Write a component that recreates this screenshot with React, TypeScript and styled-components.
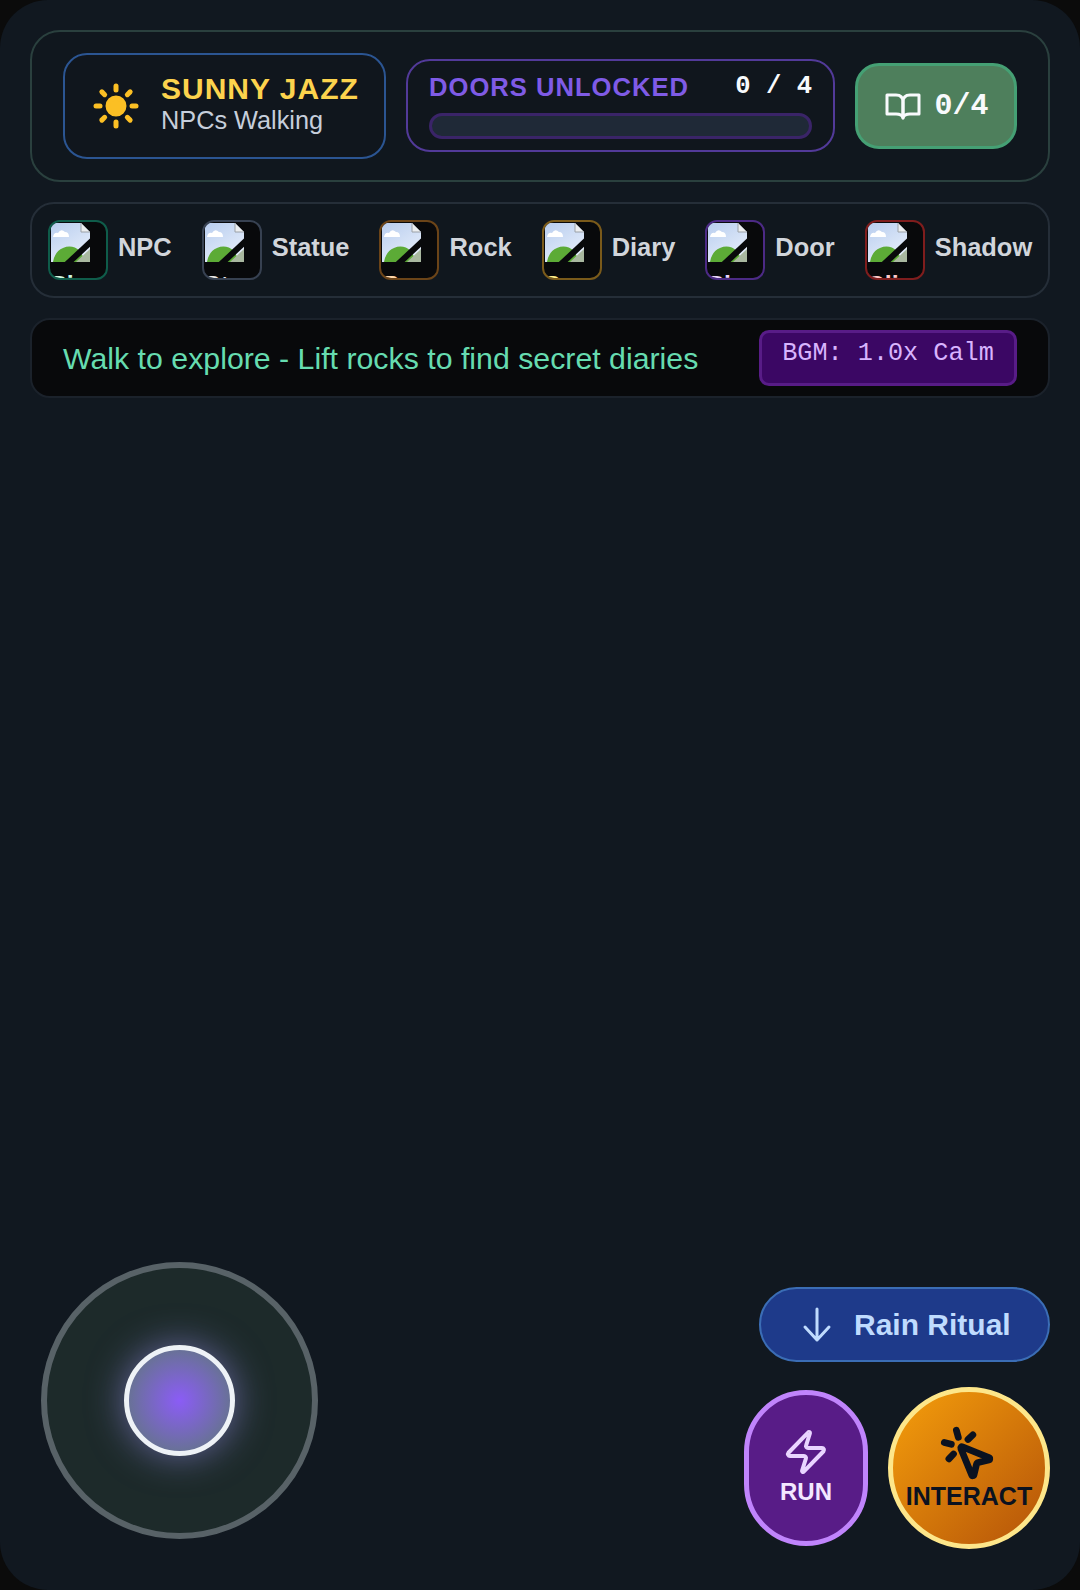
import React from 'react';
import styled, { createGlobalStyle } from 'styled-components';
import { Sun, Zap, MousePointerClick } from 'lucide-react';

const GlobalStyle = createGlobalStyle`
  html, body {
    margin: 0;
    padding: 0;
    background: #0b0b0b;
  }
  * {
    box-sizing: border-box;
  }
`;

const Screen = styled.div`
  width: 1080px;
  height: 1590px;
  border-radius: 48px;
  background: #111820;
  padding: 30px 30px 41px;
  display: flex;
  flex-direction: column;
  gap: 20px;
  overflow: hidden;
  font-family: 'Liberation Sans', Arial, sans-serif;
`;

const Header = styled.header`
  display: flex;
  align-items: center;
  gap: 20px;
  padding: 21px 30px 21px 31px;
  border: 2px solid #2a403e;
  border-radius: 30px;
  background: #10171e;
`;

const WeatherBox = styled.div`
  width: 323px;
  height: 106px;
  display: flex;
  align-items: center;
  gap: 21px;
  padding-left: 27px;
  border: 2px solid #2b5592;
  border-radius: 24px;
  background: #10161d;
`;

const WeatherText = styled.div`
  display: flex;
  flex-direction: column;
  padding-bottom: 6px;
`;

const WeatherTitle = styled.div`
  color: #fcd34d;
  font-size: 30px;
  font-weight: 700;
  letter-spacing: 1px;
  line-height: 34px;
`;

const WeatherSub = styled.div`
  color: #c6cedb;
  font-size: 25.3px;
  line-height: 28px;
`;

const ProgressBox = styled.div`
  width: 429px;
  height: 93px;
  margin-bottom: 2px;
  padding: 9px 21px 0;
  border: 2px solid #523a99;
  border-radius: 24px;
  background: #10161d;
`;

const ProgressTop = styled.div`
  display: flex;
  justify-content: space-between;
  align-items: center;
  height: 36px;
  margin-bottom: 7px;
`;

const ProgressLabel = styled.span`
  color: #7f5be6;
  font-size: 25.6px;
  font-weight: 700;
  letter-spacing: 1px;
`;

const ProgressCount = styled.span`
  color: #f8fafc;
  font-family: 'Liberation Mono', monospace;
  font-size: 25.6px;
  font-weight: 700;
  position: relative;
  top: -1px;
`;

const ProgressTrack = styled.div`
  height: 26px;
  border: 3px solid #3a2468;
  border-radius: 14px;
  background: #1f2937;
`;

const DiaryButton = styled.button`
  width: 162px;
  height: 86px;
  display: flex;
  align-items: center;
  justify-content: center;
  gap: 13px;
  padding: 0 0 0 2px;
  border: 3px solid #45a074;
  border-radius: 24px;
  background: #4e7f5c;
  color: #f8fafc;
  font-family: 'Liberation Mono', monospace;
  font-size: 30px;
  font-weight: 700;
`;

const Legend = styled.section`
  height: 96px;
  display: flex;
  align-items: center;
  gap: 30px;
  padding-left: 16px;
  border: 2px solid #252e38;
  border-radius: 24px;
  background: #10171e;
`;

const LegendItem = styled.div`
  display: flex;
  align-items: center;
  gap: 10px;
`;

const Tile = styled.div<{ $border: string; $ink: string }>`
  width: 60px;
  height: 60px;
  border: 2px solid ${(p) => p.$border};
  border-radius: 12px;
  background: #08090b;
  color: ${(p) => p.$ink};
  font-size: 25px;
  font-weight: 700;
  line-height: 30px;
  overflow: hidden;
  white-space: nowrap;
`;

const BrokenIcon = styled.svg`
  display: block;
  width: 40px;
  height: 40px;
  margin: 0 0 8px 0;
`;

const LegendLabel = styled.span`
  color: #d1d5db;
  font-size: 25.45px;
  font-weight: 700;
  padding-bottom: 6px;
`;

const MessageBar = styled.section`
  height: 80px;
  display: flex;
  align-items: center;
  justify-content: space-between;
  padding: 0 31px;
  border: 2px solid #1b222b;
  border-radius: 20px;
  background: #08090b;
`;

const Message = styled.span`
  color: #66dcb0;
  font-size: 30.3px;
  padding-top: 1px;
`;

const Badge = styled.div`
  width: 258px;
  height: 56px;
  padding-top: 6px;
  border: 3px solid #581c87;
  border-radius: 10px;
  background: #3b0764;
  color: #d8b4fe;
  font-family: 'Liberation Mono', monospace;
  font-size: 25.2px;
  text-align: center;
`;

const Controls = styled.div`
  margin-top: auto;
  display: flex;
  align-items: flex-end;
  justify-content: space-between;
`;

const Joystick = styled.div`
  width: 277px;
  height: 277px;
  margin: 0 0 10px 11px;
  display: flex;
  align-items: center;
  justify-content: center;
  border: 6px solid #586267;
  border-radius: 50%;
  background: #1d2a2a;
`;

const Knob = styled.div`
  width: 111px;
  height: 111px;
  border: 5px solid #eef2f7;
  border-radius: 50%;
  background: radial-gradient(circle, #8b5cf6 0%, #64748b 80%);
  box-shadow: 0 0 36px rgba(160, 150, 250, 0.55);
`;

const Actions = styled.div`
  display: flex;
  flex-direction: column;
  align-items: flex-end;
  gap: 25px;
`;

const RainButton = styled.button`
  width: 291px;
  height: 75px;
  display: flex;
  align-items: center;
  gap: 22px;
  padding: 0 0 0 41px;
  border: 2px solid #3b6db5;
  border-radius: 38px;
  background: #1e3a8a;
  color: #bfdbfe;
  font-family: inherit;
  font-size: 30px;
  font-weight: 700;
`;

const ActionRow = styled.div`
  display: flex;
  align-items: center;
  gap: 20px;
`;

const RunButton = styled.button`
  width: 124px;
  height: 156px;
  display: flex;
  flex-direction: column;
  align-items: center;
  justify-content: center;
  gap: 2px;
  padding: 0 0 3px;
  border: 5px solid #c084fc;
  border-radius: 62px;
  background: #581c87;
  color: #f3e8ff;
  font-family: inherit;
  font-size: 24px;
  font-weight: 700;
`;

const InteractButton = styled.button`
  width: 162px;
  height: 162px;
  display: flex;
  flex-direction: column;
  align-items: center;
  justify-content: center;
  padding: 0 2px 3px 0;
  border: 5px solid #fde68a;
  border-radius: 50%;
  background: linear-gradient(135deg, #f59e0b, #b45309);
  color: #0b1220;
  font-family: inherit;
  font-size: 25px;
  font-weight: 700;
  line-height: 26px;
`;

const InteractLabel = styled.span`
  position: relative;
  left: 1px;
`;

const legendItems = [
  { label: 'NPC', alt: 'Pi', border: '#0f5c4a', ink: '#d1fae5' },
  { label: 'Statue', alt: 'St', border: '#374151', ink: '#e5e7eb' },
  { label: 'Rock', alt: 'R', border: '#6b4418', ink: '#fed7aa' },
  { label: 'Diary', alt: 'S', border: '#7a5a1a', ink: '#fef08a' },
  { label: 'Door', alt: 'Pi', border: '#4c2a85', ink: '#e9d5ff' },
  { label: 'Shadow', alt: 'Cli', border: '#7f1d1d', ink: '#fecaca' },
];

// the browser's broken image picture
const BrokenImage: React.FC = () => {
  const skyId = React.useId();
  return (
    <BrokenIcon viewBox="0 0 40 40" aria-hidden="true">
      <defs>
        <linearGradient id={skyId} x1="0" y1="0" x2="0.6" y2="1">
          <stop offset="0" stopColor="#b8cdee" />
          <stop offset="1" stopColor="#e6eefb" />
        </linearGradient>
      </defs>
      <path d="M1 1H31L40 10V40H1Z" fill={`url(#${skyId})`} />
      <path d="M3 15Q4 10 8 11Q11 6 15 10Q19 10 19 15Z" fill="#fff" />
      <path d="M3 40Q5 29 13 26Q22 22 30 29L36 40Z" fill="#5cab36" />
      <path d="M26 40L40 27V40Z" fill="#a9b8a0" />
      <path d="M31 1V10H40Z" fill="#eceef0" stroke="#9aa0a6" strokeWidth="1" />
      <path d="M31 0H40V9Z" fill="#08090b" />
      <path d="M44 17L16 43" stroke="#08090b" strokeWidth="6" />
    </BrokenIcon>
  );
};

const App: React.FC = () => (
  <>
    <GlobalStyle />
    <Screen>
      <Header>
        <WeatherBox>
          <Sun size={48} strokeWidth={2.5} color="#fbbf24" fill="#fbbf24" />
          <WeatherText>
            <WeatherTitle>SUNNY JAZZ</WeatherTitle>
            <WeatherSub>NPCs Walking</WeatherSub>
          </WeatherText>
        </WeatherBox>
        <ProgressBox>
          <ProgressTop>
            <ProgressLabel>DOORS UNLOCKED</ProgressLabel>
            <ProgressCount>0 / 4</ProgressCount>
          </ProgressTop>
          <ProgressTrack />
        </ProgressBox>
        <DiaryButton>
          <svg width="36" height="28" viewBox="0 0 36 28" fill="none" stroke="currentColor" strokeWidth="3" strokeLinejoin="round">
            <path d="M2 3H11Q18 3 18 10V26Q17 22 11 22H2Z" />
            <path d="M34 3H25Q18 3 18 10V26Q19 22 25 22H34Z" />
          </svg>
          0/4
        </DiaryButton>
      </Header>

      <Legend>
        {legendItems.map((item) => (
          <LegendItem key={item.label}>
            <Tile $border={item.border} $ink={item.ink}>
              <BrokenImage />
              {item.alt}
            </Tile>
            <LegendLabel>{item.label}</LegendLabel>
          </LegendItem>
        ))}
      </Legend>

      <MessageBar>
        <Message>Walk to explore - Lift rocks to find secret diaries</Message>
        <Badge>BGM: 1.0x Calm</Badge>
      </MessageBar>

      <Controls>
        <Joystick>
          <Knob />
        </Joystick>
        <Actions>
          <RainButton>
            <svg width="30" height="36" viewBox="0 0 30 36" fill="none" stroke="currentColor" strokeWidth="3" strokeLinecap="round" strokeLinejoin="round">
              <path d="M15 2V33M3 20L15 33L27 20" />
            </svg>
            Rain Ritual
          </RainButton>
          <ActionRow>
            <RunButton>
              <Zap size={48} color="#e9d5ff" />
              RUN
            </RunButton>
            <InteractButton>
              <MousePointerClick size={58} strokeWidth={2.8} />
              <InteractLabel>INTERACT</InteractLabel>
            </InteractButton>
          </ActionRow>
        </Actions>
      </Controls>
    </Screen>
  </>
);

export default App;
